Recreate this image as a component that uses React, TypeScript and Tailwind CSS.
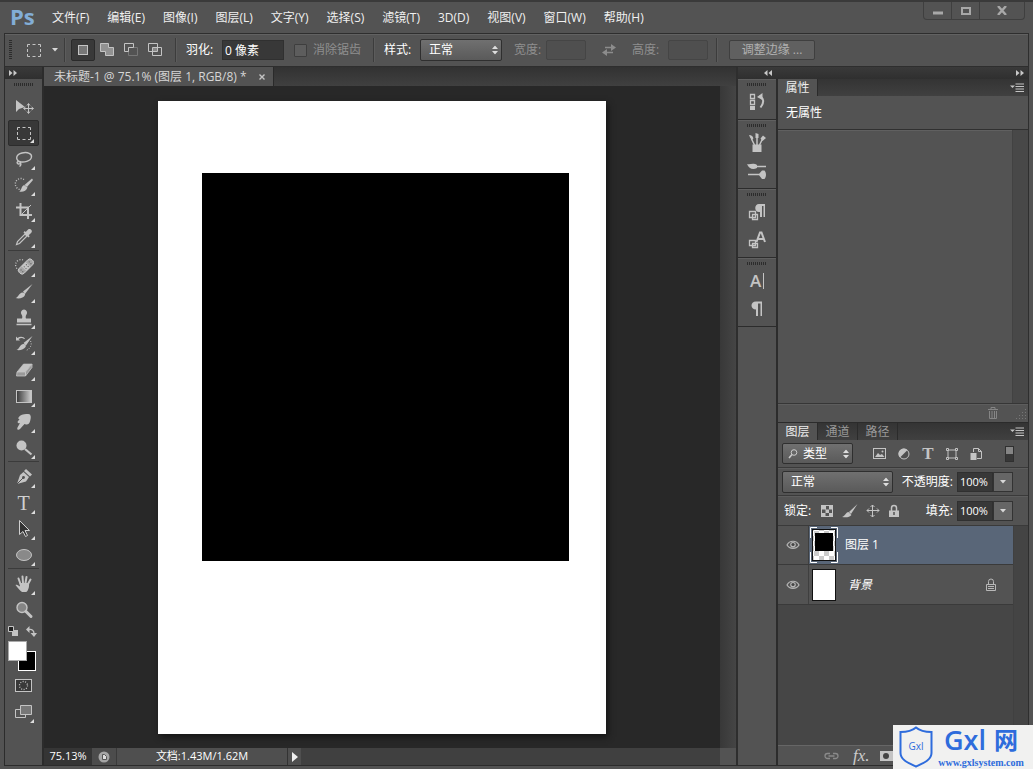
import type { ReactNode } from "react";

const uiFont = 'font-["Open_Sans","Noto_Sans_CJK_SC",sans-serif]';

const menus = [
  "文件(F)", "编辑(E)", "图像(I)", "图层(L)", "文字(Y)", "选择(S)",
  "滤镜(T)", "3D(D)", "视图(V)", "窗口(W)", "帮助(H)",
];

function Svg({ children, w = 20, h = 20 }: { children: ReactNode; w?: number; h?: number }) {
  return (
    <svg width={w} height={h} viewBox={`0 0 ${w} ${h}`} fill="none" stroke="#c4c4c4" aria-hidden="true" className="shrink-0">
      {children}
    </svg>
  );
}

const F = "#c4c4c4";

const icons: Record<string, ReactNode> = {
  move: (
    <Svg>
      <path d="M2 3v12l3-3 6-2z" fill={F} stroke="none" />
      <path d="M14.500 7v9M10 11.500h9M13 8.500l1.500-2 1.500 2M13 14.500l1.500 2 1.500-2M11.500 10l-2 1.500 2 1.500M17.500 10l2 1.500-2 1.500" strokeWidth="1" />
    </Svg>
  ),
  marquee: (
    <Svg>
      <path d="M3.500 7V4.500H6M8.500 4.500h3M14 4.500h2.500V7M16.500 9v3M16.500 14v2.500H14M11.500 16.500h-3M6 16.500H3.500V14M3.500 12V9" />
    </Svg>
  ),
  lasso: (
    <Svg>
      <path d="M5.500 13C1 10 2 5.500 8 4c6-1.500 10 1 9.500 4-.5 4-8 6-12 4.500-2-.5-3 1-2 2s3.500.5 2.500-1c1.500 1 1 3-.5 4" strokeWidth="1.4" />
    </Svg>
  ),
  quick: (
    <Svg>
      <path d="M10 4.500a5.500 5.500 0 1 0-3 10" strokeDasharray="1 1.6" strokeWidth="1.4" />
      <path d="M18 3.500l1 1.500-6 7-2.500-2z" fill={F} stroke="none" />
      <path d="M10 10l3.500 2.500c-1 3.500-5 5-8.500 4 2.500-.5 2-5 5-6.500z" fill={F} stroke="none" />
    </Svg>
  ),
  crop: (
    <Svg>
      <path d="M6.500 2v12H18M2 6.500h12V18" strokeWidth="2" />
      <path d="M7 14L17 4" />
    </Svg>
  ),
  eyedropper: (
    <Svg>
      <path d="M11 7l2 2-7.500 7.500-3 1 1-3z" strokeWidth="1.200" />
      <path d="M9.500 5.500l5 5 1.200-1.200-1-1 2.600-2.600c2-2-1.500-4.800-3.200-3.200L11.700 5l-1-1z" fill={F} stroke="none" />
    </Svg>
  ),
  heal: (
    <Svg>
      <path d="M9 4a5 5 0 1 0-4 10" strokeDasharray="1 1.600" strokeWidth="1.300" />
      <g transform="rotate(-45 12 10.500)">
        <rect x="3" y="7" width="18" height="7" rx="3" fill="#a5a5a5" stroke="#d4d4d4" strokeWidth="0.8" />
        <rect x="9" y="7" width="6" height="7" fill={F} stroke="none" />
        <path d="M5.500 9.500h1M5.500 12h1M10 9.500h1M13 9.500h1M10 12h1M13 12h1M17 9.500h1M17 12h1" stroke="#555" />
      </g>
    </Svg>
  ),
  brush: (
    <Svg>
      <path d="M18.500 2L9 9.500l2 2.500z" fill={F} stroke="none" />
      <path d="M8.500 10.500c2 0 3 1 2.500 2.500-1 3-6 4-9.500 3 2.500-.5 3.500-5 7-5.500z" fill={F} stroke="none" />
    </Svg>
  ),
  stamp: (
    <Svg>
      <path d="M10 1.500a3.200 3.200 0 0 0-2.500 5c1 1.500 1 3 .5 4H3v4h14v-4h-5c-.5-1-.5-2.500.5-4a3.200 3.200 0 0 0-2.500-5z" fill={F} stroke="none" />
      <path d="M2.500 16.500h15" strokeWidth="1.500" />
    </Svg>
  ),
  history: (
    <Svg>
      <path d="M2 2.500v4h4L4.500 5C7 3.500 9 4 10 5h1C10 2.500 6 2 3.500 4zM18.500 2l-9 7 2.500 2.500zM9 10c2 0 3.500 1.500 2.500 3-1.500 2.500-5 3.500-9 3 2.500-.5 3.500-5.500 6.500-6z" fill={F} stroke="none" />
      <path d="M16.500 7c2 4-.5 8-4.500 9.500" strokeDasharray="1 1.500" />
    </Svg>
  ),
  eraser: (
    <Svg>
      <path d="M9.500 4h8.500l-6.500 8H3z" fill={F} stroke={F} strokeWidth="0.600" />
      <path d="M3 12h8.500v4H2.500zM11.500 12L18 4v3.500L11.500 16z" fill="#999" stroke={F} strokeWidth="0.800" />
    </Svg>
  ),
  gradient: (
    <Svg>
      <defs>
        <linearGradient id="tool-gradient"><stop stopColor="#383838" /><stop offset="1" stopColor="#d0d0d0" /></linearGradient>
      </defs>
      <rect x="2.500" y="4.500" width="15" height="12" fill="url(#tool-gradient)" />
    </Svg>
  ),
  smudge: (
    <Svg>
      <path d="M4.500 5.500C7 2 12 1.500 16 2.500c1.500 2 .5 5 0 7-.7 2-2 3.500-4 3l-1.500-.5L6 17c-1.500 1.700-3.500.5-2.500-1.500L6 11c-2 1-3-.5-2-2l1.500-1.500c-1-.5-1.500-1-1-2z" fill={F} stroke="none" />
    </Svg>
  ),
  dodge: (
    <Svg>
      <circle cx="7.500" cy="7.500" r="5" fill={F} stroke="none" />
      <path d="M11 11l6.500 5.500" strokeWidth="2.200" />
    </Svg>
  ),
  pen: (
    <Svg>
      <path d="M12 2l6 5.500-2 2L10 4z" fill={F} stroke="none" />
      <path d="M9.500 5l5.500 5-3 4.500L3 17l3-9z" fill={F} stroke="none" />
      <path d="M3 17l6-6" stroke="#505050" />
      <circle cx="9.500" cy="10.500" r="1.400" fill="#505050" stroke="none" />
    </Svg>
  ),
  path: (
    <Svg>
      <path d="M5.500 1.500v14l3.500-3 2.500 5 2-1-2.500-5h4.500z" fill="#333" stroke="#d0d0d0" />
    </Svg>
  ),
  ellipse: (
    <Svg>
      <ellipse cx="10" cy="10" rx="7.500" ry="5.500" fill="#898989" />
    </Svg>
  ),
  hand: (
    <Svg>
      <path d="M6.500 10L4.500 4.500M9 9l-.5-6.500M11.500 9l1-6M14 10l2.500-4.500" strokeWidth="2" strokeLinecap="round" />
      <path d="M5.500 9h9.500c.5 4-1 8.500-3 9H8c-2-1-4.500-4.500-6.500-7 1.500-1 3 .5 4.500 1.500z" fill={F} stroke="none" />
    </Svg>
  ),
  zoom: (
    <Svg>
      <circle cx="8" cy="7.500" r="5" fill="#858585" strokeWidth="1.400" />
      <path d="M12 11.500l5 5" strokeWidth="3" strokeLinecap="round" />
    </Svg>
  ),
  swap: (
    <Svg w={14} h={12}>
      <path d="M3 3.500h8M3 8.500h8" stroke="#8c8c8c" strokeWidth="1.500" />
      <path d="M9 0l5 3.500L9 7zM5 5L0 8.500 5 12z" fill="#8c8c8c" stroke="none" />
    </Svg>
  ),
  lock: (
    <Svg w={12} h={14}>
      <path d="M3.500 7V4a2.500 2.500 0 0 1 5 0v3" strokeWidth="1.500" />
      <rect x="1" y="6.500" width="10" height="6.500" fill={F} stroke="none" />
      <path d="M6 8v3" stroke="#555" strokeWidth="1.500" />
    </Svg>
  ),
  eye: (
    <Svg w={14} h={10}>
      <path d="M1 5c2.500-5 9.500-5 12 0-2.500 4.500-9.500 4.500-12 0z" strokeWidth="1.200" stroke="#b5b5b5" />
      <circle cx="7" cy="4.700" r="2.800" fill="#b5b5b5" stroke="none" />
      <circle cx="7" cy="4.500" r="1.600" fill="#444" stroke="none" />
    </Svg>
  ),
};

const toolGroups: [string, string][][] = [
  [["move", "移动工具"], ["marquee", "矩形选框工具"], ["lasso", "套索工具"], ["quick", "快速选择工具"], ["crop", "裁剪工具"], ["eyedropper", "吸管工具"]],
  [["heal", "污点修复画笔"], ["brush", "画笔工具"], ["stamp", "仿制图章"], ["history", "历史记录画笔"], ["eraser", "橡皮擦"], ["gradient", "渐变工具"], ["smudge", "涂抹工具"], ["dodge", "减淡工具"]],
  [["pen", "钢笔工具"], ["type", "文字工具"], ["path", "路径选择"], ["ellipse", "椭圆工具"]],
  [["hand", "抓手工具"], ["zoom", "缩放工具"]],
];

function Grip() {
  return (
    <svg width="20" height="3" className="mx-auto shrink-0" aria-hidden="true">
      <path d="M0 1.500h20" stroke="#2c2c2c" strokeWidth="3" strokeDasharray="1 1" />
    </svg>
  );
}

function Chevrons({ left = false }: { left?: boolean }) {
  return (
    <svg width="8" height="6" viewBox="0 0 8 6" aria-hidden="true" className={left ? "rotate-180" : ""}>
      <path d="M0 0l3.500 3L0 6zM4.500 0L8 3 4.500 6z" fill="#c8c8c8" />
    </svg>
  );
}

function UpDown() {
  return (
    <svg width="6" height="9" viewBox="0 0 6 9" aria-hidden="true" className="pointer-events-none absolute right-1 top-1/2 -translate-y-1/2">
      <path d="M0 3.500L3 0l3 3.500zM0 5.500L3 9l3-3.500z" fill="#ddd" />
    </svg>
  );
}

function Down() {
  return (
    <svg width="6" height="4" viewBox="0 0 6 4" aria-hidden="true" className="shrink-0">
      <path d="M0 0h6L3 3.500z" fill="#d8d8d8" />
    </svg>
  );
}

function PanelMenu() {
  return (
    <button aria-label="面板菜单" className="ml-auto mr-1 self-center">
      <Svg w={14} h={9}>
        <path d="M0 2.500h5L2.500 5z" fill={F} stroke="none" />
        <path d="M5.500 1h8.500M5.500 3.500h8.500M5.500 6h8.500M5.500 8.500h8.500" />
      </Svg>
    </button>
  );
}

function Divider() {
  return <div className="h-6 w-px shrink-0 bg-[#3c3c3c] shadow-[1px_0_#5c5c5c]" />;
}

const selectClass =
  "h-full w-full appearance-none rounded-xs border border-[#2f2f2f] bg-linear-to-b from-[#707070] to-[#5a5a5a] text-white outline-none";

function TitleBar() {
  return (
    <header className="flex h-[33px] shrink-0 items-center border-t-2 border-[#3a3a3a] pl-2.5">
      <div className="w-[42px] pb-1 text-[22px] leading-6 font-bold text-[#82add6]">Ps</div>
      <nav className="flex flex-1 gap-[18px] text-[12px] text-[#f0f0f0]">
        {menus.map((m) => (
          <button key={m} className="whitespace-nowrap">{m}</button>
        ))}
      </nav>
      <div className="mr-2 flex h-[18px] self-start rounded-b border border-t-0 border-[#3f3f3f]">
        <button aria-label="最小化" className="flex w-7 items-center justify-center border-r border-[#3f3f3f]">
          <Svg w={10} h={10}><path d="M0 7h10" strokeWidth="3" stroke="#a8a8a8" /></Svg>
        </button>
        <button aria-label="最大化" className="flex w-7 items-center justify-center border-r border-[#3f3f3f]">
          <Svg w={10} h={8}><rect x="1" y="1" width="8" height="6" strokeWidth="2" stroke="#a8a8a8" /></Svg>
        </button>
        <button aria-label="关闭" className="flex w-11 items-center justify-center">
          <Svg w={10} h={9}><path d="M1 0l8 9M9 0L1 9" strokeWidth="2.400" stroke="#a8a8a8" /></Svg>
        </button>
      </div>
    </header>
  );
}

function OptionsBar() {
  return (
    <div className="mx-1 flex h-[34px] shrink-0 items-center border border-[#2e2e2e] text-[12px] text-white shadow-[inset_0_1px_#626262]">
      <svg width="3" height="20" className="ml-1 shrink-0" aria-hidden="true">
        <path d="M1.500 0v20" stroke="#2c2c2c" strokeWidth="3" strokeDasharray="1 1" />
      </svg>
      <button aria-label="工具预设" className="ml-3 flex shrink-0 items-center gap-2">
        {icons.marquee}
        <Down />
      </button>
      <div className="ml-1.5 flex shrink-0 items-center"><Divider /></div>
      <div className="ml-1.5 flex shrink-0 items-center">
        <button aria-label="新选区" className="flex h-[22px] w-6 items-center justify-center rounded-xs border border-[#2a2a2a] bg-[#393939]">
          <Svg w={12} h={12}><rect x="1.500" y="1.500" width="9" height="9" fill="#777" /></Svg>
        </button>
        <button aria-label="添加到选区" className="flex w-6 justify-center">
          <Svg w={14} h={14}><path d="M.5.500h8v4h5v8h-8v-4h-5z" fill="#929292" /></Svg>
        </button>
        <button aria-label="从选区减去" className="flex w-6 justify-center">
          <Svg w={14} h={14}><path d="M4.500 4.500h9v8h-9z" stroke="#777" /><path d="M.5.500h9v4h-5v4h-4z" fill="#555" /></Svg>
        </button>
        <button aria-label="与选区交叉" className="flex w-6 justify-center">
          <Svg w={14} h={14}><path d="M.5.500h9v8h-9zM4.500 4.500h9v8h-9z" /><path d="M5 5h4v3H5z" fill="#888" stroke="none" /></Svg>
        </button>
      </div>
      <div className="ml-2"><Divider /></div>
      <label htmlFor="feather" className="ml-2.5 w-9 shrink-0 whitespace-nowrap">羽化:</label>
      <input id="feather" defaultValue="0 像素" className="h-5 w-[62px] border border-[#303030] bg-[#383838] px-0.5 text-white" />
      <label className="ml-2.5 flex shrink-0 items-center gap-1.5 text-[#8f8f8f]">
        <input type="checkbox" disabled className="h-[13px] w-[13px] appearance-none rounded-[1px] border border-[#3e3e3e] bg-[#5d5d5d]" />
        消除锯齿
      </label>
      <div className="ml-3"><Divider /></div>
      <label htmlFor="style" className="ml-2.5 w-9 shrink-0 whitespace-nowrap">样式:</label>
      <div className="relative h-[22px] w-[82px] shrink-0">
        <select id="style" className={`${selectClass} px-2`}><option>正常</option></select>
        <UpDown />
      </div>
      <label htmlFor="width" className="ml-3 w-8 shrink-0 whitespace-nowrap text-[#8f8f8f]">宽度:</label>
      <input id="width" disabled className="h-5 w-10 rounded-xs border border-[#454545] bg-[#4f4f4f]" />
      <button aria-label="交换宽高" className="ml-4 shrink-0">{icons.swap}</button>
      <label htmlFor="height" className="ml-4 w-9 shrink-0 whitespace-nowrap text-[#8f8f8f]">高度:</label>
      <input id="height" disabled className="h-5 w-10 rounded-xs border border-[#454545] bg-[#4f4f4f]" />
      <div className="ml-2"><Divider /></div>
      <button className="ml-3 flex h-5 w-[86px] shrink-0 items-center justify-center whitespace-nowrap rounded-xs border border-[#3f3f3f] bg-[#606060] text-[#b0b0b0]">
        调整边缘 ...
      </button>
    </div>
  );
}

function Toolbar() {
  return (
    <aside className="flex w-[40px] shrink-0 flex-col border-l border-r-2 border-[#2c2c2c]">
      <div className="flex h-3 shrink-0 items-center bg-linear-to-b from-[#3a3a3a] to-[#2f2f2f] pl-1"><Chevrons /></div>
      <div className="flex h-[15px] shrink-0 items-start pt-1"><Grip /></div>
      {toolGroups.map((group, g) => (
        <div key={g} className={g ? "mx-[3px] border-t border-[#3b3b3b] pt-0.5" : "mx-[3px]"}>
          {group.map(([id, label]) => (
            <button
              key={id}
              aria-label={label}
              className={`relative flex h-[26px] w-full items-center justify-center rounded-xs ${id === "marquee" ? "border border-[#2c2c2c] bg-[#383838]" : ""}`}
            >
              {id === "type" ? (
                <span className="font-['Liberation_Serif',serif] text-[20px] leading-5 text-[#d0d0d0]">T</span>
              ) : icons[id]}
              {id !== "move" && id !== "zoom" && (
                <svg width="4" height="4" className="absolute bottom-0.5 right-1" aria-hidden="true">
                  <path d="M4 0v4H0z" fill="#ddd" />
                </svg>
              )}
            </button>
          ))}
        </div>
      ))}
      <div className="flex h-4 shrink-0 items-center justify-between px-[3px]">
        <button aria-label="默认颜色">
          <Svg w={10} h={10}><path d="M4 4h6v6H4z" fill={F} stroke="none" /><path d="M.5.500h5v5h-5z" fill="#222" /></Svg>
        </button>
        <button aria-label="切换颜色" className="mr-0.5">
          <Svg w={11} h={11}><path d="M3 3.500c3-.5 5 1 5 4" strokeWidth="1.300" /><path d="M0 3.500L3.500 0v7zM4.500 7H11l-3 4z" fill={F} stroke="none" /></Svg>
        </button>
      </div>
      <div className="grid shrink-0 grid-cols-[10px_9px_9px] grid-rows-[10px_10px_10px] pl-[3px] pt-0.5">
        <button aria-label="背景色" className="col-span-2 col-start-2 row-span-2 row-start-2 border border-white bg-black" />
        <button aria-label="前景色" className="z-10 col-span-2 col-start-1 row-span-2 row-start-1 border border-[#aaa] bg-white" />
      </div>
      <button aria-label="快速蒙版" className="mt-2 flex shrink-0 justify-center">
        <Svg w={18} h={14}><rect x=".5" y=".5" width="16" height="12" fill="#383838" /><circle cx="8.500" cy="6.500" r="4" strokeDasharray="1 1.500" strokeWidth="1.300" /></Svg>
      </button>
      <button aria-label="屏幕模式" className="relative mt-2 flex h-[22px] shrink-0 items-center justify-center">
        <Svg w={18} h={14}><path d="M.5 4.500h10v8H.500z" fill="#555" /><path d="M5.500.500h11v9h-11z" fill="#777" /></Svg>
        <svg width="4" height="4" className="absolute bottom-0 right-2" aria-hidden="true"><path d="M4 0v4H0z" fill="#ddd" /></svg>
      </button>
    </aside>
  );
}

function Workspace() {
  return (
    <main className="flex min-w-0 flex-1 flex-col">
      <div className="flex h-[19px] shrink-0 bg-linear-to-b from-[#323232] to-[#404040]">
        <div className="flex items-center gap-3 border-r border-[#2a2a2a] bg-[#535353] pl-2.5 pr-2 text-[12px] whitespace-nowrap text-[#d6d6d6]">
          未标题-1 @ 75.1% (图层 1, RGB/8) *
          <button aria-label="关闭文档">
            <Svg w={6} h={6}><path d="M.5.500l5 5M5.500.500l-5 5" strokeWidth="1.400" /></Svg>
          </button>
        </div>
      </div>
      <div className="flex min-h-0 flex-1">
        <div className="flex min-w-0 flex-1 items-center justify-center bg-[#282828]">
          <div className="h-[633px] w-[448px] shrink-0 bg-white pl-11 pt-[72px] shadow-[2px_3px_6px_#151515]">
            <div className="h-[388px] w-[367px] bg-black" />
          </div>
        </div>
        <div className="w-4 shrink-0 bg-linear-to-r from-[#383838] to-[#454545]" />
      </div>
      <footer className="flex h-[17px] shrink-0 bg-[#404040] text-[11px] text-white">
        <span className="flex w-12 items-center justify-center bg-[#353535]">75.13%</span>
        <button aria-label="共享" className="flex w-[25px] items-center justify-center border-r border-[#3a3a3a] bg-[#4c4c4c]">
          <Svg w={12} h={12}><circle cx="6" cy="6" r="5.500" fill="#a5a5a5" stroke="none" /><path d="M4.500 3.500h2l2 2v3h-4z" fill="#ddd" stroke="#555" /></Svg>
        </button>
        <span className="flex w-[170px] items-center justify-center bg-[#4f4f4f]">文档:1.43M/1.62M</span>
        <button aria-label="状态选项" className="flex w-[14px] items-center justify-center border-l border-[#333] bg-[#4f4f4f]">
          <svg width="6" height="10"><path d="M0 0l6 5-6 5z" fill="#eee" /></svg>
        </button>
        <span className="ml-auto w-4 bg-[#535353]" />
      </footer>
    </main>
  );
}

const dockGroups: { name: string; icon: ReactNode }[][] = [
  [{
    name: "历史记录",
    icon: <Svg><path d="M3.500 2.500h4v4h-4zM3.500 8.500h4v4h-4z" strokeWidth="1.300" /><path d="M3 14h5v4H3z" fill={F} stroke="none" /><path d="M12 4.500c5 1 5.500 6 1.500 11" strokeWidth="2" /><path d="M10 5l5.500-4v7z" fill={F} stroke="none" /></Svg>,
  }],
  [{
    name: "画笔预设",
    icon: <Svg><path d="M5.500 11.500h9V19h-9z" fill={F} stroke="none" /><path d="M7.500 12L4.500 6M10 12V4M12.500 12l3-6" strokeWidth="1.500" /><path d="M2 2c3 0 5 2 4 4.500C3.500 7 3 4 2 2zM8.500 0l3 1v4h-3zM13.500 5.500l2.500-3 3 2.500-3.500 3z" fill={F} stroke="none" /></Svg>,
  }, {
    name: "画笔",
    icon: <Svg><path d="M9 5.500h10M1 13.500h11" strokeWidth="1.700" /><path d="M0 3c3 1 6-1.500 10 1v3C6 9 2 8 0 3zM11.500 13.500l3.500-4h2.500c2 2.500 2 6 0 8.500H15z" fill={F} stroke="none" /></Svg>,
  }],
  [{
    name: "段落样式",
    icon: <Svg><path d="M12 10c-5 0-5-8 0-8h6v13h-1.500V4H15v11h-2v-5z" fill={F} stroke="none" /><path d="M2.500 9.500h6v6h-6zM5.500 12.500h5v5h-5z" strokeWidth="1.300" /></Svg>,
  }, {
    name: "字符样式",
    icon: <Svg><path d="M9.500 12L13 2.500h1.500L18 12M11 9h6" strokeWidth="2" /><path d="M2.500 10.500h6v5h-6zM5.500 13.500h5v4h-5z" strokeWidth="1.300" /></Svg>,
  }],
  [{
    name: "字符",
    icon: <span className="flex items-center gap-0.5 text-[17px] leading-5 font-semibold text-[#c4c4c4]">A<i className="h-4 w-px bg-[#c4c4c4]" /></span>,
  }, {
    name: "段落",
    icon: <Svg><path d="M9 10.500c-6 0-6-8 0-8h6V17h-1.500V4.500H11V17H9z" fill={F} stroke="none" /></Svg>,
  }],
];

function Dock() {
  return (
    <div className="flex w-[39px] shrink-0 flex-col border-r border-[#2c2c2c]">
      {dockGroups.map((group, i) => (
        <div key={i} className="flex flex-col items-center border-b border-[#2c2c2c] pb-[3px] pt-1 shadow-[inset_0_1px_#606060]">
          <Grip />
          <div className="flex w-full flex-col pt-0.5">
            {group.map(({ name, icon }) => (
              <button key={name} aria-label={name} className="flex h-7 w-full items-center justify-center">{icon}</button>
            ))}
          </div>
        </div>
      ))}
    </div>
  );
}

const tabStrip = "flex shrink-0 bg-linear-to-b from-[#343434] to-[#404040] text-[12px]";
const tab = "flex w-10 items-center justify-center border-r border-[#2b2b2b] whitespace-nowrap";

function PropertiesPanel() {
  return (
    <section className="flex min-h-0 flex-1 flex-col">
      <div className={`${tabStrip} h-[17px]`}>
        <button className={`${tab} bg-[#535353] text-[#eee]`}>属性</button>
        <PanelMenu />
      </div>
      <div className="flex h-[34px] shrink-0 items-center border-b border-[#303030] pl-2 text-[12px] text-white">无属性</div>
      <div className="flex min-h-0 flex-1 shadow-[inset_0_1px_#606060]">
        <div className="flex-1" />
        <div className="w-4 border-l border-[#424242] bg-[#484848]" />
      </div>
      <div className="flex h-[19px] shrink-0 items-center justify-end border-t border-[#363636] shadow-[inset_0_1px_#5d5d5d]">
        <button aria-label="删除" className="mr-4">
          <Svg w={12} h={12}><path d="M1 2.500h10M4 2V.500h4V2M2.500 4v7.500h7V4M5 4v7M7.500 4v7" stroke="#858585" /></Svg>
        </button>
        <Svg w={13} h={13}><path d="M10 2.500h2M7 5.500h5M4 8.500h8M1 11.500h11" strokeDasharray="1 2" stroke="#777" /></Svg>
      </div>
    </section>
  );
}

function Percent({ id, label }: { id: string; label: string }) {
  return (
    <div className="ml-auto mr-[15px] flex shrink-0 items-center">
      <label htmlFor={id} className="mr-1 whitespace-nowrap">{label}</label>
      <input id={id} defaultValue="100%" className="h-5 w-9 border border-[#303030] bg-[#383838] px-0.5 text-[11px]" />
      <button aria-label={`${label}滑块`} className="flex h-5 w-5 items-center justify-center border border-[#333] bg-[#666]"><Down /></button>
    </div>
  );
}

function LayersPanel() {
  return (
    <section className="flex h-[343px] shrink-0 flex-col border-t border-[#2b2b2b]">
      <div className={`${tabStrip} h-[17px]`}>
        <button className={`${tab} bg-[#535353] text-[#eee]`}>图层</button>
        <button className={`${tab} text-[#999]`}>通道</button>
        <button className={`${tab} text-[#999]`}>路径</button>
        <PanelMenu />
      </div>
      <div className="flex h-7 shrink-0 items-center border-b border-[#3a3a3a] pl-1 text-[12px]">
        <div className="relative h-[21px] w-[71px] shrink-0">
          <select aria-label="过滤类型" className={`${selectClass} pl-5`}><option>类型</option></select>
          <svg width="10" height="10" className="pointer-events-none absolute left-1.5 top-1.5" fill="none" stroke="#ccc" aria-hidden="true">
            <circle cx="6" cy="3.500" r="2.800" /><path d="M4 5.500L1 9" strokeWidth="1.500" />
          </svg>
          <UpDown />
        </div>
        <div className="ml-5 flex gap-2.5">
          <button aria-label="像素图层"><Svg w={14} h={14}><rect x=".5" y="1.500" width="12" height="10" /><path d="M2 10l3-4 2 2 2-1 2.500 3z" fill={F} stroke="none" /><circle cx="9.500" cy="4.500" r="1" fill={F} stroke="none" /></Svg></button>
          <button aria-label="调整图层"><Svg w={14} h={14}><circle cx="7" cy="7" r="5" fill="#505050" /><path d="M3 10.500A5 5 0 0 1 10.500 3z" fill={F} stroke="none" /></Svg></button>
          <button aria-label="文字图层" className="w-[14px] font-['Liberation_Serif',serif] text-[17px] leading-4 font-bold text-[#c4c4c4]">T</button>
          <button aria-label="形状图层"><Svg w={14} h={14}><path d="M3 3h8v8H3z" /><path d="M1.500 1.500h2v2h-2zM10.500 1.500h2v2h-2zM1.500 10.500h2v2h-2zM10.500 10.500h2v2h-2z" fill="#505050" /></Svg></button>
          <button aria-label="智能对象"><Svg w={14} h={14}><path d="M4.500 5V1.500h5l3 3v7H8M9.500 1.500v3h3" /><path d="M1.500 6h6v7h-6z" fill={F} stroke="none" /></Svg></button>
        </div>
        <button aria-label="过滤开关" className="ml-auto mr-[14px] flex h-4 w-[9px] flex-col border border-[#303030] bg-[#373737]"><span className="h-[7px] w-full bg-[#858585]" /></button>
      </div>
      <div className="flex h-7 shrink-0 items-center border-b border-[#3a3a3a] pl-1 text-[12px] text-white shadow-[inset_0_1px_#5d5d5d]">
        <div className="relative h-[22px] w-[111px] shrink-0">
          <select aria-label="混合模式" className={`${selectClass} px-2`}><option>正常</option></select>
          <UpDown />
        </div>
        <Percent id="opacity" label="不透明度:" />
      </div>
      <div className="flex h-[30px] shrink-0 items-center border-b border-[#3a3a3a] pl-1.5 text-[12px] text-white shadow-[inset_0_1px_#5d5d5d]">
        <span className="w-9 whitespace-nowrap">锁定:</span>
        <div className="flex items-center gap-2">
          <button aria-label="锁定透明像素"><Svg w={14} h={14}><rect x="1.500" y="1.500" width="11" height="11" fill="#555" /><path d="M2 2h4v3.500H2zM9 2h3v3.500H9zM5.500 5.500H9V9H5.500zM2 9h3.500v3H2zM9 9h3v3H9z" fill={F} stroke="none" /></Svg></button>
          <button aria-label="锁定图像像素"><Svg w={16} h={14}><path d="M15.500 0L7 8l2 2zM6.500 8L9.500 11c-2 2.500-5.500 2.500-9.500 2 3.500-1 3.500-4.500 6.500-5z" fill={F} stroke="none" /></Svg></button>
          <button aria-label="锁定位置"><Svg w={14} h={14}><path d="M6.500 1v12M1 6.500h12M4.500 3l2-2 2 2M4.500 11l2 2 2-2M3 4.500l-2 2 2 2M11 4.500l2 2-2 2" /></Svg></button>
          <button aria-label="全部锁定">{icons.lock}</button>
        </div>
        <Percent id="fill" label="填充:" />
      </div>
      <div className="flex min-h-0 flex-1 bg-[#464646]">
        <ul className="flex-1 text-[12px] text-white">
          <li className="flex h-[39px] items-center border-b border-[#3a3a3a] bg-[#596678]">
            <button aria-label="隐藏图层 1" className="flex h-full w-[31px] items-center justify-center border-r border-[#3f3f3f] bg-[#535353]">{icons.eye}</button>
            <svg width="30" height="38" viewBox="0 0 30 38" className="shrink-0" aria-hidden="true">
              <defs><pattern id="checker" width="10" height="10" patternUnits="userSpaceOnUse"><path d="M0 0h10v10H0z" fill="#fff" /><path d="M0 0h5v5H0zM5 5h5v5H5z" fill="#ccc" /></pattern></defs>
              <path d="M1.500 12V1.500H8M22 1.500h6.500V12M28.500 26v10.500H22M8 36.500H1.500V26" fill="none" stroke="#fff" />
              <rect x="3.500" y="3.500" width="23" height="31" fill="url(#checker)" stroke="#111" />
              <path d="M6 7h18v18H6z" fill="#000" />
            </svg>
            <span className="ml-1.5">图层 1</span>
          </li>
          <li className="flex h-10 items-center border-b border-[#3a3a3a] bg-[#535353]">
            <button aria-label="隐藏背景" className="flex h-full w-[31px] items-center justify-center border-r border-[#3f3f3f]">{icons.eye}</button>
            <span className="ml-[3px] h-8 w-6 border border-[#111] bg-white" />
            <span className="ml-3 italic">背景</span>
            <span className="ml-auto mr-4">
              <Svg w={12} h={14}><path d="M3.500 6V3.500a2.500 2.500 0 0 1 5 0V6M1.500 6.500h9v6h-9zM3 8.500h6M3 10.500h6" stroke="#b8b8b8" /></Svg>
            </span>
          </li>
        </ul>
        <div className="w-[15px] border-l border-[#404040] bg-[#444]" />
      </div>
      <div className="flex h-5 shrink-0 items-center gap-3.5 border-t border-[#666] pl-[46px]">
        <button aria-label="链接图层"><Svg w={15} h={8}><path d="M6 1.500H3.500a2.500 2.500 0 0 0 0 5H6M9 1.500h2.500a2.500 2.500 0 0 1 0 5H9M4.500 4h6" stroke="#8a8a8a" strokeWidth="1.300" /></Svg></button>
        <button className="font-['Liberation_Serif',serif] text-[17px] leading-4 text-[#ccc] italic">fx.</button>
        <button aria-label="添加蒙版" className="-ml-1"><Svg w={16} h={10}><path d="M0 0h16v10H0z" fill={F} stroke="none" /><circle cx="6" cy="5" r="3" fill="#444" stroke="none" /></Svg></button>
      </div>
    </section>
  );
}

function Watermark() {
  return (
    <div className="absolute bottom-0 right-0 flex h-11 w-[140px] items-center bg-[#f1f1f0] text-[#2e6cdc]">
      <div className="relative ml-1.5 h-[42px] w-[34px] shrink-0">
        <svg width="34" height="42" viewBox="0 0 34 42" fill="none" stroke="#2e6cdc" strokeWidth="2" aria-hidden="true">
          <path d="M17 1.500C13 5 7 6 1.500 6v21c0 7 8 10 15.500 13.500C24.500 37 32.500 34 32.500 27V6C27 6 21 5 17 1.500z" />
        </svg>
        <span className="absolute inset-x-0 top-[14px] text-center text-[10px] leading-3">Gxl</span>
      </div>
      <div className="flex flex-1 flex-col items-center pr-2 pl-1">
        <span className="flex items-center gap-2 font-semibold whitespace-nowrap">
          <span className="text-[27px] leading-7">Gxl</span>
          <span className="text-[24px] leading-7">网</span>
        </span>
        <span className="pt-1 font-['Liberation_Serif',serif] text-[10px] leading-[10px] font-bold">www.gxlsystem.com</span>
      </div>
    </div>
  );
}

export default function App() {
  return (
    <div className={`relative flex h-screen min-h-[700px] flex-col overflow-hidden bg-[#535353] ${uiFont}`}>
      <TitleBar />
      <OptionsBar />
      <div className="mx-1 mb-[3px] flex min-h-0 flex-1 border-b border-[#2c2c2c]">
        <Toolbar />
        <Workspace />
        <div className="flex w-[293px] shrink-0 flex-col border-r border-l-2 border-[#2e2e2e]">
          <div className="flex h-3 shrink-0 items-center justify-between bg-linear-to-b from-[#3a3a3a] to-[#2f2f2f] pl-[26px] pr-1">
            <button aria-label="展开面板"><Chevrons left /></button>
            <button aria-label="折叠面板"><Chevrons /></button>
          </div>
          <div className="flex min-h-0 flex-1">
            <Dock />
            <div className="flex min-w-0 flex-1 flex-col border-l border-[#2c2c2c]">
              <PropertiesPanel />
              <LayersPanel />
            </div>
          </div>
        </div>
      </div>
      <Watermark />
    </div>
  );
}
